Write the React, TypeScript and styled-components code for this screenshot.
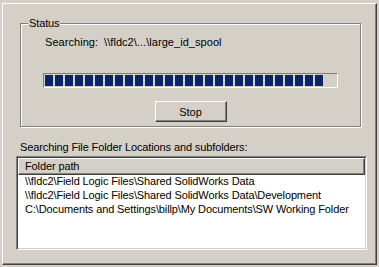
import React from "react";
import styled, { createGlobalStyle } from "styled-components";

const Global = createGlobalStyle`
  html, body { margin: 0; padding: 0; background: #d4d0c8; }
  body {
    width: 379px; height: 267px; overflow: hidden;
    font-family: "Liberation Sans", Arial, sans-serif;
    font-size: 11px; letter-spacing: -0.12px; color: #000;
  }
`;

const Frame = styled.div`
  box-sizing: border-box;
  margin: 3px 0 0 2px;
  width: 375px;
  height: 262px;
  border-top: 1px solid #fff;
  border-left: 1px solid #fff;
  border-right: 1px solid #404040;
  border-bottom: 1px solid #404040;
  box-shadow: inset -1px -1px 0 #808080;
  display: flex;
  flex-direction: column;
`;

const GroupBox = styled.div`
  position: relative;
  box-sizing: border-box;
  margin: 19px 0 0 17px;
  width: 341px;
  height: 104px;
  border: 1px solid #808080;
  box-shadow: inset 1px 1px 0 #fff, 1px 1px 0 #fff;
  display: flex;
  flex-direction: column;
`;

const Legend = styled.span`
  position: absolute;
  top: -7px;
  left: 7px;
  padding: 0 1px;
  background: #d4d0c8;
  line-height: 13px;
`;

const StatusRow = styled.div`
  display: flex;
  gap: 6px;
  margin: 12px 0 0 24px;
  line-height: 13px;
  letter-spacing: 0.05px;
  white-space: nowrap;
`;

const Progress = styled.div`
  box-sizing: border-box;
  margin: 24px 0 0 22px;
  width: 295px;
  height: 15px;
  border: 1px solid;
  border-color: #808080 #fff #fff #808080;
  padding: 1px;
  display: flex;
  gap: 2px;
`;

const Block = styled.div`
  width: 8px;
  height: 11px;
  background: #0a246a;
`;

const Button = styled.button`
  box-sizing: border-box;
  align-self: center;
  margin-top: 13px;
  width: 72px;
  height: 21px;
  padding: 0;
  background: #d4d0c8;
  border: 1px solid;
  border-color: #fff #404040 #404040 #fff;
  box-shadow: inset -1px -1px 0 #808080;
  font: inherit;
  color: #000;
`;

const Caption = styled.div`
  margin: 14px 0 0 17px;
  line-height: 13px;
  white-space: nowrap;
`;

const ListView = styled.div`
  box-sizing: border-box;
  margin: 2px 0 0 13px;
  width: 351px;
  height: 94px;
  background: #fff;
  border: 1px solid;
  border-color: #808080 #fff #fff #808080;
  box-shadow: inset 1px 1px 0 #404040, inset -1px -1px 0 #d4d0c8;
  padding: 1px;
  display: flex;
  flex-direction: column;
`;

const Header = styled.div`
  box-sizing: border-box;
  height: 17px;
  padding: 1px 0 0 6px;
  background: #d4d0c8;
  border: 1px solid;
  border-color: #fff #404040 #404040 #fff;
  box-shadow: inset -1px -1px 0 #808080;
  line-height: 13px;
  white-space: nowrap;
`;

const Rows = styled.div`
  margin-top: -1px;
`;

const Row = styled.div`
  padding-left: 7px;
  line-height: 14px;
  white-space: nowrap;
`;

const folders = [
  "\\\\fldc2\\Field Logic Files\\Shared SolidWorks Data",
  "\\\\fldc2\\Field Logic Files\\Shared SolidWorks Data\\Development",
  "C:\\Documents and Settings\\billp\\My Documents\\SW Working Folder",
];

export default function App() {
  return (
    <>
      <Global />
      <Frame>
        <GroupBox>
          <Legend>Status</Legend>
          <StatusRow>
            <span>Searching:</span>
            <span>{"\\\\fldc2\\...\\large_id_spool"}</span>
          </StatusRow>
          <Progress>
            {Array.from({ length: 28 }).map((_, i) => (
              <Block key={i} />
            ))}
          </Progress>
          <Button>Stop</Button>
        </GroupBox>
        <Caption>Searching File Folder Locations and subfolders:</Caption>
        <ListView>
          <Header>Folder path</Header>
          <Rows>
            {folders.map((f) => (
              <Row key={f}>{f}</Row>
            ))}
          </Rows>
        </ListView>
      </Frame>
    </>
  );
}
